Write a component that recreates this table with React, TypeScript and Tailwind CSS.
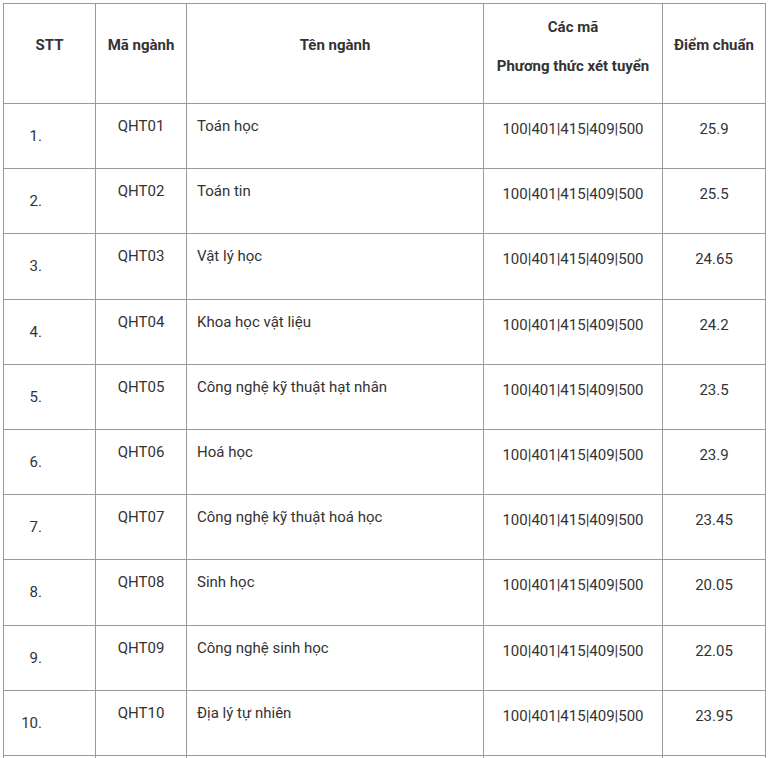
const rows = [
  { code: 'QHT01', name: 'Toán học', score: '25.9' },
  { code: 'QHT02', name: 'Toán tin', score: '25.5' },
  { code: 'QHT03', name: 'Vật lý học', score: '24.65' },
  { code: 'QHT04', name: 'Khoa học vật liệu', score: '24.2' },
  { code: 'QHT05', name: 'Công nghệ kỹ thuật hạt nhân', score: '23.5' },
  { code: 'QHT06', name: 'Hoá học', score: '23.9' },
  { code: 'QHT07', name: 'Công nghệ kỹ thuật hoá học', score: '23.45' },
  { code: 'QHT08', name: 'Sinh học', score: '20.05' },
  { code: 'QHT09', name: 'Công nghệ sinh học', score: '22.05' },
  { code: 'QHT10', name: 'Địa lý tự nhiên', score: '23.95' },
];

const methods = '100|401|415|409|500';

export default function App() {
  return (
    <div className="min-h-screen bg-white pl-[3px] pt-[3px] font-['Roboto',sans-serif] text-[15px] leading-[22px] text-[#333]">
      <table className="w-[763px] table-fixed border-collapse">
        <colgroup>
          <col className="w-[92px]" />
          <col className="w-[91px]" />
          <col className="w-[297px]" />
          <col className="w-[179px]" />
          <col className="w-[103px]" />
        </colgroup>
        <thead>
          <tr className="h-[100px] font-bold">
            <th className="border border-[#9a9a9a] pt-[30px] text-center align-top">STT</th>
            <th className="border border-[#9a9a9a] pt-[30px] text-center align-top">Mã ngành</th>
            <th className="border border-[#9a9a9a] pt-[30px] text-center align-top">Tên ngành</th>
            <th className="border border-[#9a9a9a] pt-[12px] text-center align-top">
              <p>Các mã</p>
              <p className="mt-[17px]">Phương thức xét tuyển</p>
            </th>
            <th className="border border-[#9a9a9a] pt-[30px] text-center align-top">Điểm chuẩn</th>
          </tr>
        </thead>
        <tbody>
          {rows.map((row, i) => (
            <tr key={row.code} className="h-[65.2px]">
              <td className="border border-[#9a9a9a] align-middle">
                <span className="inline-block w-[38px] text-right">{i + 1}.</span>
              </td>
              <td className="border border-[#9a9a9a] pt-[11px] text-center align-top">{row.code}</td>
              <td className="border border-[#9a9a9a] pl-[10px] pt-[11px] align-top">{row.name}</td>
              <td className="border border-[#9a9a9a] pt-[14px] text-center align-top">{methods}</td>
              <td className="border border-[#9a9a9a] pt-[14px] text-center align-top">{row.score}</td>
            </tr>
          ))}
          <tr className="h-[65.2px]">
            <td className="border border-[#9a9a9a]" />
            <td className="border border-[#9a9a9a]" />
            <td className="border border-[#9a9a9a]" />
            <td className="border border-[#9a9a9a]" />
            <td className="border border-[#9a9a9a]" />
          </tr>
        </tbody>
      </table>
    </div>
  );
}
